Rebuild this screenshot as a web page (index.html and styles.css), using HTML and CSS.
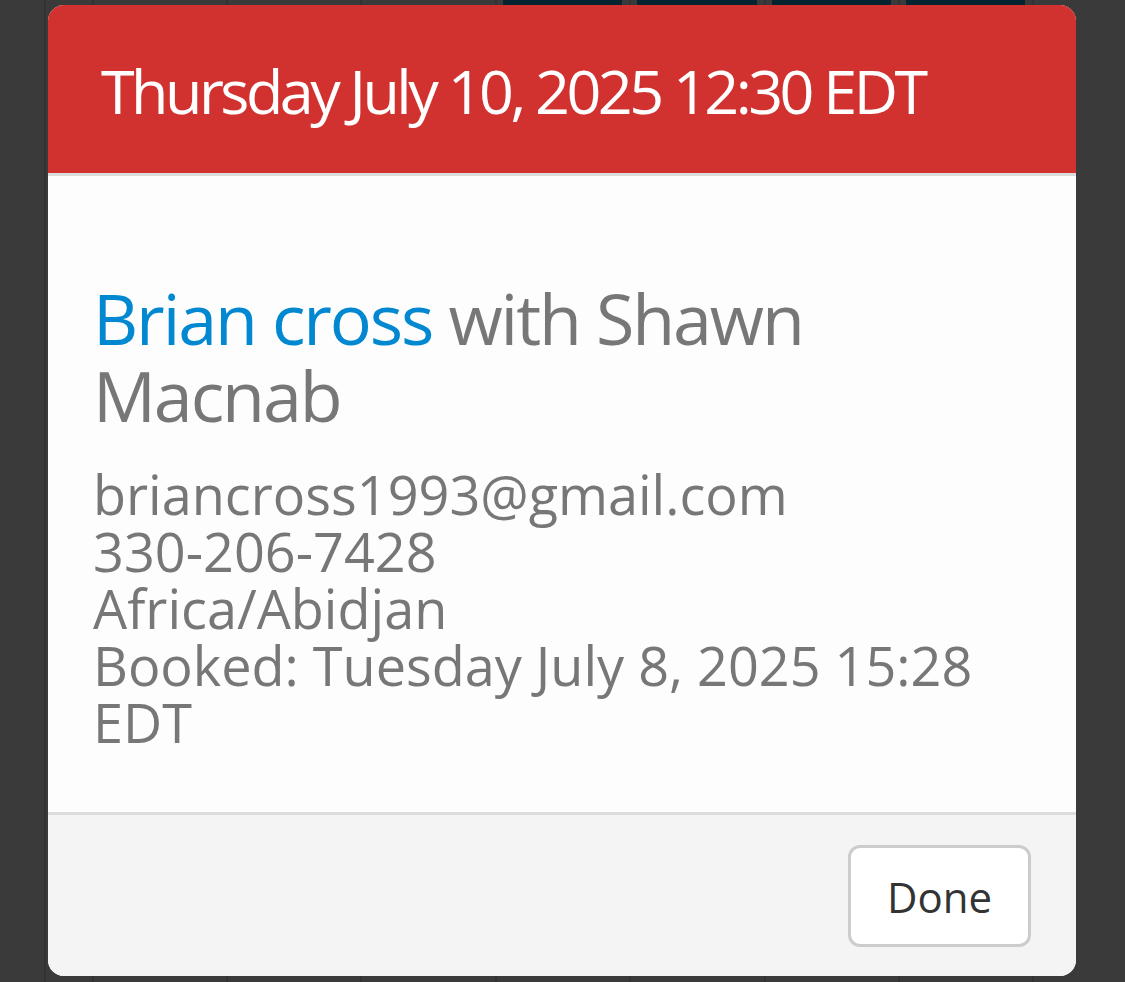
FILE: index.html
```html
<!DOCTYPE html>
<html>
<head>
<meta charset="utf-8">
<link rel="stylesheet" href="styles.css">
</head>
<body>
<div class="cal">
  <div class="col c0"></div>
  <div class="col c1"></div>
  <div class="col"></div>
  <div class="col"></div>
  <div class="col"></div>
  <div class="col dark"><span></span></div>
  <div class="col dark"><span></span></div>
  <div class="col dark"><span></span></div>
  <div class="col dark"><span></span></div>
  <div class="col last"></div>
</div>
<div class="modal">
  <div class="modal-header">
    <h1 class="title">Thursday July 10, 2025 12:30 EDT</h1>
  </div>
  <div class="modal-body">
    <h2 class="name"><span class="client">Brian cross</span> with Shawn Macnab</h2>
    <div class="details">
      <div>briancross1993@gmail.com</div>
      <div>330-206-7428</div>
      <div>Africa/Abidjan</div>
      <div>Booked: Tuesday July 8, 2025 15:28 EDT</div>
    </div>
  </div>
  <div class="modal-footer">
    <button class="btn">Done</button>
  </div>
</div>
</body>
</html>
```
FILE: styles.css
```css
html, body {
  margin: 0;
  padding: 0;
  height: 100%;
}
body {
  background: #3a3a3b;
  font-family: "Open Sans", "Noto Sans", sans-serif;
  position: relative;
  overflow: hidden;
}
.cal {
  display: grid;
  grid-template-columns: 44px 48px 134px 134px 135px 134px 135px 134px 134px 1fr;
  height: 982px;
}
.col {
  border-left: 2px solid #333334;
  box-sizing: border-box;
  padding: 0 7px 0 6px;
}
.c0 {
  border-left: none;
}
.dark span {
  display: block;
  height: 40px;
  background: #062330;
  border-radius: 0 0 10px 10px;
}
.modal {
  position: absolute;
  left: 48px;
  top: 5px;
  width: 1028px;
  height: 971px;
  border-radius: 16px;
  overflow: hidden;
  background: #fdfdfd;
  display: flex;
  flex-direction: column;
}
.modal-header {
  background: #d2322f;
  height: 168px;
  border-bottom: 3px solid #dcdcdc;
  padding-left: 53px;
  display: flex;
  align-items: center;
  flex-shrink: 0;
}
.title {
  margin: 0;
  color: #fff;
  font-weight: 400;
  font-size: 61px;
  letter-spacing: -3.5px;
  line-height: 1;
  padding-top: 2px;
}
.modal-body {
  flex: 1;
  padding: 104px 46px 0 45px;
}
.name {
  margin: 0;
  font-weight: 400;
  font-size: 70px;
  line-height: 77px;
  color: #777;
  letter-spacing: -2.1px;
}
.client {
  color: #0288d1;
}
.details {
  margin-top: 32px;
  font-size: 54px;
  line-height: 57px;
  color: #777;
}
.modal-footer {
  flex-shrink: 0;
  height: 164px;
  box-sizing: border-box;
  border-top: 3px solid #dcdcdc;
  background: #f4f4f4;
  display: flex;
  justify-content: flex-end;
  align-items: flex-start;
  padding: 30px 45px 0 0;
}
.btn {
  width: 183px;
  height: 102px;
  background: #fff;
  border: 3px solid #cccccc;
  border-radius: 12px;
  font-family: "Open Sans", "Noto Sans", sans-serif;
  font-size: 42px;
  color: #333;
  padding: 0;
}
```
